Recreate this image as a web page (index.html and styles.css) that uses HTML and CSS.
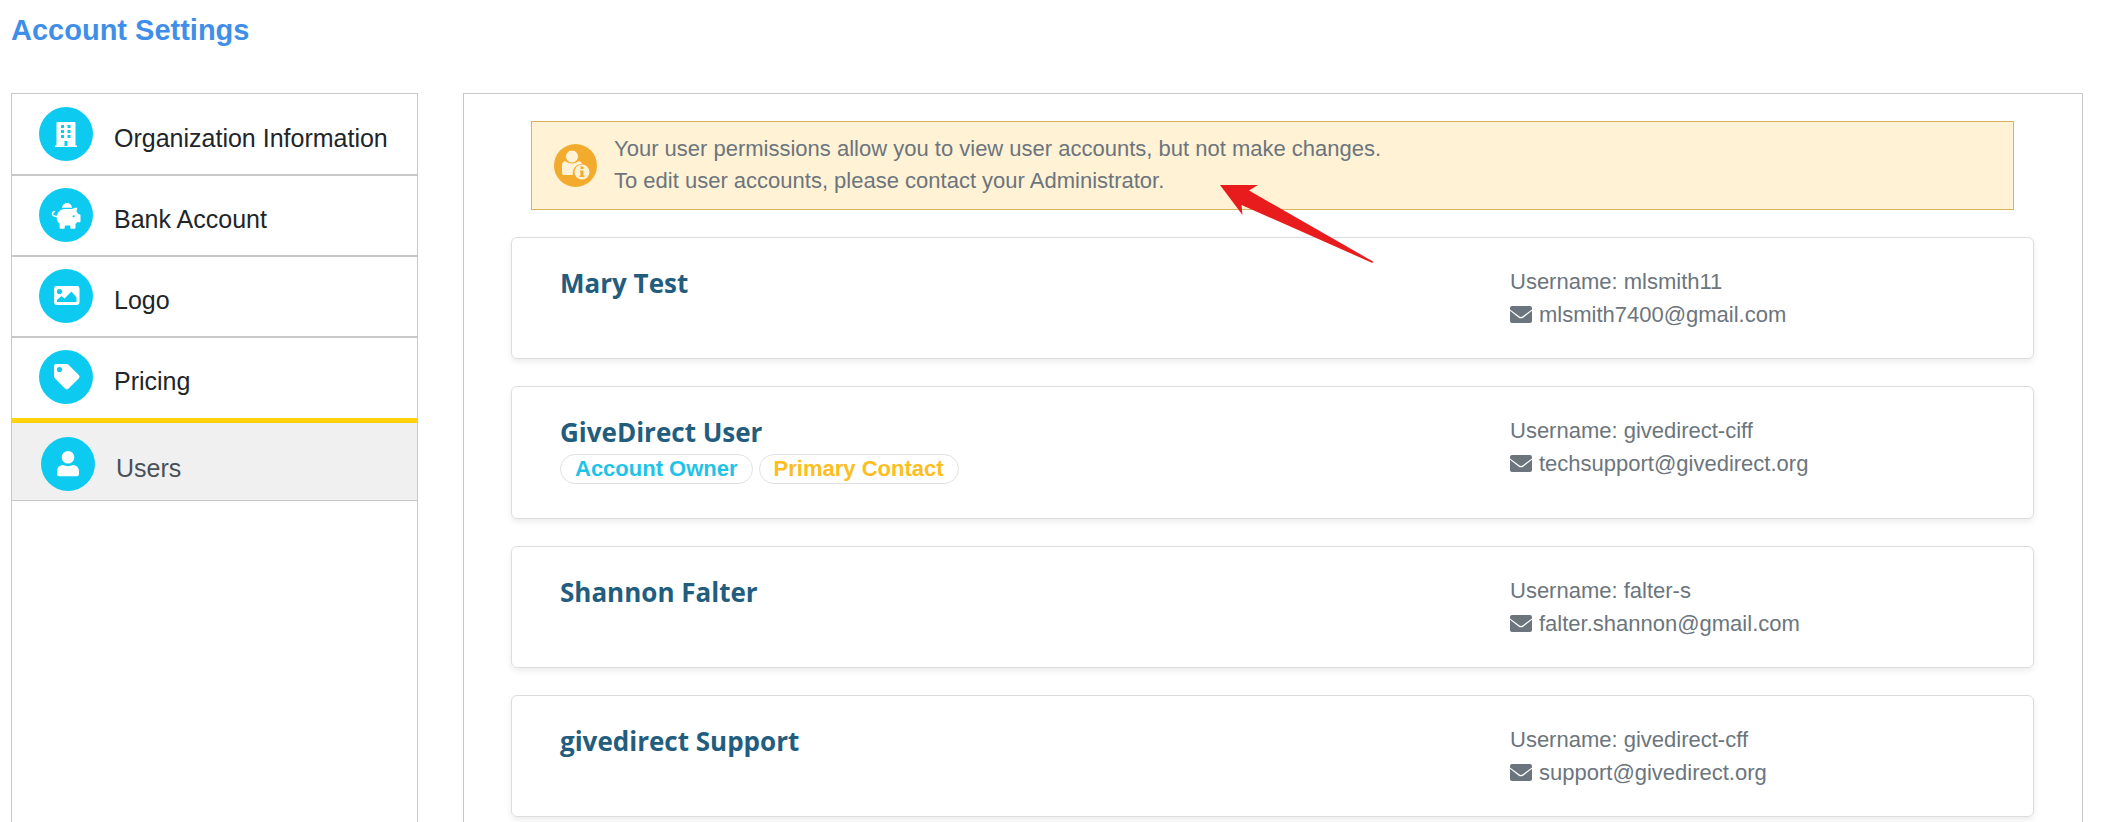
FILE: index.html
```html
<!DOCTYPE html>
<html lang="en">

  <head>
    <meta charset="UTF-8">
    <title>Account Settings</title>
    <meta name="viewport" content="width=device-width, initial-scale=1">
    <link rel="stylesheet" href="styles.css">
  </head>

  <body>
    <svg class="sprite" aria-hidden="true">
      <symbol id="envelope" viewBox="0 0 22 17">
        <path d="M2 0h18a2 2 0 0 1 2 2v1.600l-9.200 6.600a3 3 0 0 1-3.600 0L0 3.600V2a2 2 0 0 1 2-2z" />
        <path d="M0 4.800l8.500 6.600a4.200 4.200 0 0 0 5 0L22 4.800V15a2 2 0 0 1-2 2H2a2 2 0 0 1-2-2z" />
      </symbol>
    </svg>
    <h1>Account Settings</h1>
    <div class="layout">
      <nav class="side-menu" aria-label="Account Settings">
        <ul>
          <li>
            <a href="#organization">
              <span class="menu-icon">
                <svg viewBox="0 0 54 54" aria-hidden="true">
                  <path fill-rule="evenodd" d="M18.500 15h17a1 1 0 0 1 1 1v22.500H38V40H16v-1.500h1.500V16a1 1 0 0 1 1-1zM22 18v3h3v-3zM28.500 18v3h3v-3zM22 23v3h3v-3zM28.500 23v3h3v-3zM22 28v3h3v-3zM28.500 28v3h3v-3zM25.500 34v5h3v-5z" />
                </svg>
              </span>
              <span>Organization Information</span>
            </a>
          </li>
          <li>
            <a href="#bank">
              <span class="menu-icon">
                <svg viewBox="0 0 54 54" aria-hidden="true">
                  <path d="M23 19.800a5 4.800 0 0 1 10 0z" />
                  <path d="M18.500 28.500c-3 .3-5-.8-5-2.800 0-1.200.8-2 2-2.200" fill="none" stroke="#fff" stroke-width="1.500" stroke-linecap="round" />
                  <path fill-rule="evenodd" d="M25.500 21h7.300c1.700-1 3.700-1.400 5.700-1.300l-1.100 3.600c.9.900 1.500 1.900 1.900 2.900h1.200a1 1 0 0 1 1 1v6a1 1 0 0 1-1 1h-2.300l-1.700 1.800v3.800a1 1 0 0 1-1 1h-3.200a1 1 0 0 1-1-1v-2.300h-5.500v2.300a1 1 0 0 1-1 1h-3.200a1 1 0 0 1-1-1v-4.300c-1.900-1.300-2.900-3.300-2.900-5.500 0-5 3.300-9 7.800-9zM34.600 27.200a1.100 1.100 0 1 0 .01 2.200a1.100 1.100 0 0 0-.01-2.200z" />
                </svg>
              </span>
              <span>Bank Account</span>
            </a>
          </li>
          <li>
            <a href="#logo">
              <span class="menu-icon">
                <svg viewBox="0 0 54 54" aria-hidden="true">
                  <path fill-rule="evenodd" d="M17.500 17h20.600a2.400 2.400 0 0 1 2.400 2.400v14.200a2.400 2.400 0 0 1-2.400 2.400H17.500a2.400 2.400 0 0 1-2.400-2.400V19.400a2.400 2.400 0 0 1 2.400-2.400zM20.500 20a2.600 2.600 0 1 0 .01 5.200a2.600 2.600 0 0 0-.01-5.200zM18 33h19.500v-4.500L32.500 22.500 25.500 29.500l-3-2.500-4.500 4z" />
                </svg>
              </span>
              <span>Logo</span>
            </a>
          </li>
          <li>
            <a href="#pricing">
              <span class="menu-icon">
                <svg viewBox="0 0 54 54" aria-hidden="true">
                  <path fill-rule="evenodd" d="M17 14h10.500a3 3 0 0 1 2 .8L39.800 25a2.500 2.500 0 0 1 0 3.500L29.500 38.500a2.500 2.500 0 0 1-3.500 0L15.800 28.300a3 3 0 0 1-.8-2V16a2 2 0 0 1 2-2zM20.500 17a2.600 2.600 0 1 0 .01 5.200a2.600 2.600 0 0 0-.01-5.200z" />
                </svg>
              </span>
              <span>Pricing</span>
            </a>
          </li>
          <li class="active">
            <a href="#users" aria-current="page">
              <span class="menu-icon">
                <svg viewBox="0 0 54 54" aria-hidden="true">
                  <circle cx="27" cy="20.300" r="6.300" />
                  <path d="M22 28c3 1.500 7 1.500 10 0a6 6 0 0 1 6 6v3a2.300 2.300 0 0 1-2.300 2.300H18.300A2.300 2.300 0 0 1 16 37v-3a6 6 0 0 1 6-6z" />
                </svg>
              </span>
              <span>Users</span>
            </a>
          </li>
        </ul>
      </nav>

      <main class="panel">
        <div class="notice" role="note">
          <svg class="notice-icon" viewBox="0 0 43 43" aria-hidden="true">
            <circle cx="21.500" cy="21.500" r="21.500" fill="#f3ab2e" />
            <g fill="#fff2d5">
              <path d="M11 17c4 3 10 3 14 0 2 1 3 2 3 3a9 9 0 0 0-9 11h-9a2 2 0 0 1-2-2v-8c0-2 1-3 3-4z" />
              <circle cx="18" cy="12.500" r="6.500" stroke="#f3ab2e" />
              <circle cx="28" cy="28" r="7.500" />
            </g>
            <path d="M26.500 22.500h3v2.500h-3zM26 26.500h3.500v5h1v1.500h-5v-1.500h1V28H26z" fill="#f3ab2e" />
          </svg>
          <p>
            Your user permissions allow you to view user accounts, but not make changes.<br>
            To edit user accounts, please contact your Administrator.
          </p>
          <svg class="arrow" viewBox="0 0 154 79" aria-hidden="true">
            <path d="M0 0H38L29 5.500 153 76.500 152.500 78 21.500 20 22.500 30z" />
          </svg>
        </div>

        <section class="user-card">
          <h2>Mary Test</h2>
          <div class="contact">
            <p>Username: mlsmith11</p>
            <p><svg class="envelope" aria-hidden="true"><use href="#envelope" /></svg>mlsmith7400@gmail.com</p>
          </div>
        </section>

        <section class="user-card">
          <div>
            <h2>GiveDirect User</h2>
            <div class="badges">
              <span class="badge owner">Account Owner</span>
              <span class="badge primary">Primary Contact</span>
            </div>
          </div>
          <div class="contact">
            <p>Username: givedirect-ciff</p>
            <p><svg class="envelope" aria-hidden="true"><use href="#envelope" /></svg>techsupport@givedirect.org</p>
          </div>
        </section>

        <section class="user-card">
          <h2>Shannon Falter</h2>
          <div class="contact">
            <p>Username: falter-s</p>
            <p><svg class="envelope" aria-hidden="true"><use href="#envelope" /></svg>falter.shannon@gmail.com</p>
          </div>
        </section>

        <section class="user-card">
          <h2>givedirect Support</h2>
          <div class="contact">
            <p>Username: givedirect-cff</p>
            <p><svg class="envelope" aria-hidden="true"><use href="#envelope" /></svg>support@givedirect.org</p>
          </div>
        </section>
      </main>
    </div>
  </body>
</html>
```
FILE: styles.css
```css
* {
  box-sizing: border-box;
}

body {
  display: flex;
  flex-direction: column;
  min-height: 100vh;
  margin: 0;
  padding: 10px 19px 0 11px;
  background-color: #fff;
  color: #6c757d;
  font-family: Arial, "Liberation Sans", sans-serif;
  font-size: 22px;
  line-height: 33px;
}

h1,
h2,
p,
ul {
  margin: 0;
  padding: 0;
}

h1 {
  margin-bottom: 43px;
  color: #3f8fe8;
  font-size: 29px;
  line-height: 40px;
}

.sprite {
  display: none;
}

.layout {
  display: grid;
  flex: 1;
  grid-template-columns: 407px 1fr;
  gap: 45px;
}

/* left menu */
.side-menu {
  border: 1px solid #c8c8c8;
  border-bottom: 0;
}

.side-menu ul {
  list-style: none;
}

.side-menu li {
  border: 1px solid #c8c8c8;
  border-width: 1px 0;
}

.side-menu li:first-child {
  border-top-color: transparent;
}

.side-menu li:has(+ .active) {
  border-bottom-color: transparent;
}

.side-menu a {
  display: flex;
  align-items: center;
  gap: 21px;
  padding: 12px 27px 13px;
  color: #212529;
  font-size: 25px;
  text-decoration: none;
}

.side-menu a span:last-child {
  padding-top: 8px;
}

.side-menu .active {
  border-top: 5px solid #ffd20a;
  background-color: #f0f0f0;
}

.side-menu .active a {
  padding: 14px 29px 9px;
  color: #495057;
}

.menu-icon {
  flex: none;
  width: 54px;
  height: 54px;
  border-radius: 50%;
  background-color: #0dcaf0;
}

.menu-icon svg {
  display: block;
  fill: #fff;
}

/* right side */
.panel {
  padding: 27px 48px 4px 47px;
  border: 1px solid #c8c8c8;
  border-bottom: 0;
}

.notice {
  display: flex;
  position: relative;
  align-items: center;
  gap: 17px;
  margin: 0 20px 27px;
  padding: 11px 22px 12px;
  border: 1px solid #d5b45c;
  background-color: #fff2d5;
  line-height: 32px;
}

.notice-icon {
  flex: none;
  width: 43px;
  height: 43px;
}

.arrow {
  position: absolute;
  top: 63px;
  left: 688px;
  width: 154px;
  height: 79px;
  fill: #e81c1c;
}

.user-card {
  display: grid;
  grid-template-columns: 2fr 1fr;
  margin-bottom: 27px;
  padding: 27px 48px;
  border: 1px solid #dcdddf;
  border-radius: 6px;
  box-shadow: 0 3px 6px rgba(0, 0, 0, .075);
}

h2 {
  color: #235d7e;
  font-family: "Segoe UI", "Open Sans", "Noto Sans", sans-serif;
  font-size: 26px;
  line-height: 36px;
}

.badges {
  display: flex;
  gap: 6px;
  padding: 4px 0 7px;
}

.badge {
  padding: 0 14px;
  border: 1px solid #dee2e6;
  border-radius: 15px;
  font-weight: bold;
  line-height: 28px;
}

.owner {
  color: #1fc3e8;
}

.primary {
  color: #fbbe1e;
}

.envelope {
  width: 22px;
  height: 17px;
  margin-right: 7px;
  fill: #6c757d;
  vertical-align: -1px;
}
```
